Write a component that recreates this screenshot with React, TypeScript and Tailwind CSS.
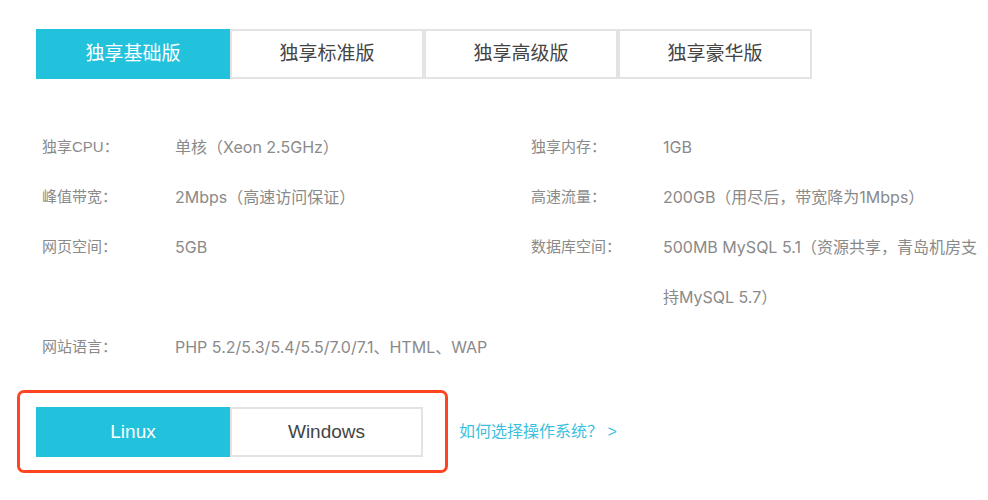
import React, { useState } from "react";

const plans = ["独享基础版", "独享标准版", "独享高级版", "独享豪华版"];

const leftSpecs = [
  { label: "独享CPU：", value: "单核（Xeon 2.5GHz）" },
  { label: "峰值带宽：", value: "2Mbps（高速访问保证）" },
  { label: "网页空间：", value: "5GB", tall: true },
  { label: "网站语言：", value: "PHP 5.2/5.3/5.4/5.5/7.0/7.1、HTML、WAP" },
];

const rightSpecs = [
  { label: "独享内存：", value: "1GB" },
  { label: "高速流量：", value: "200GB（用尽后，带宽降为1Mbps）" },
  {
    label: "数据库空间：",
    value: (
      <>
        500MB MySQL 5.1（资源共享，青岛机房支
        <br />
        持MySQL 5.7）
      </>
    ),
    tall: true,
  },
];

const valueFont = { fontFamily: 'Inter, "Noto Sans CJK SC", sans-serif' };

const App = () => {
  const [plan, setPlan] = useState(0);
  const [os, setOs] = useState("Linux");

  return (
    <div
      className="w-[988px] h-[500px] bg-white pt-[29px] overflow-hidden"
      style={{ fontFamily: '"Liberation Sans", "Noto Sans CJK SC", sans-serif' }}
    >
      <div className="flex ml-[36px]">
        {plans.map((p, i) => (
          <button
            key={p}
            onClick={() => setPlan(i)}
            className={
              i === plan
                ? "w-[194px] h-[50px] bg-[#22c2dd] text-white text-[19px] border-2 border-[#22c2dd]"
                : "w-[194px] h-[50px] bg-white text-[#444] text-[19px] border-2 border-[#e3e3e3]"
            }
          >
            {p}
          </button>
        ))}
      </div>

      <div className="flex mt-[43px] ml-[42px] text-[15px] text-[#8a8a8a] leading-[50px]">
        <div className="w-[489px]">
          {leftSpecs.map((s) => (
            <div key={s.label} className={s.tall ? "flex h-[100px]" : "flex h-[50px]"}>
              <div className="w-[133px] shrink-0">{s.label}</div>
              <div className="text-[16px] whitespace-nowrap" style={valueFont}>
                {s.value}
              </div>
            </div>
          ))}
        </div>
        <div className="flex-1">
          {rightSpecs.map((s) => (
            <div key={s.label} className={s.tall ? "flex h-[100px]" : "flex h-[50px]"}>
              <div className="w-[132px] shrink-0">{s.label}</div>
              <div className="text-[16px] whitespace-nowrap" style={valueFont}>
                {s.value}
              </div>
            </div>
          ))}
        </div>
      </div>

      <div className="flex items-center mt-[18px] ml-[17px]">
        <div className="flex border-[3px] border-[#ff4422] rounded-[7px] pl-[16px] pt-[14px] pb-[13px] pr-[22px]">
          {["Linux", "Windows"].map((o) => (
            <button
              key={o}
              onClick={() => setOs(o)}
              className={
                os === o
                  ? "w-[194px] h-[50px] bg-[#22c2dd] text-white text-[19px] border-2 border-[#22c2dd]"
                  : "w-[193px] h-[50px] bg-white text-[#444] text-[19px] border-2 border-[#e3e3e3]"
              }
            >
              {o}
            </button>
          ))}
        </div>
        <a className="ml-[11px] text-[16px] text-[#3bbfe0] cursor-pointer">如何选择操作系统？ &gt;</a>
      </div>
    </div>
  );
};

export default App;
